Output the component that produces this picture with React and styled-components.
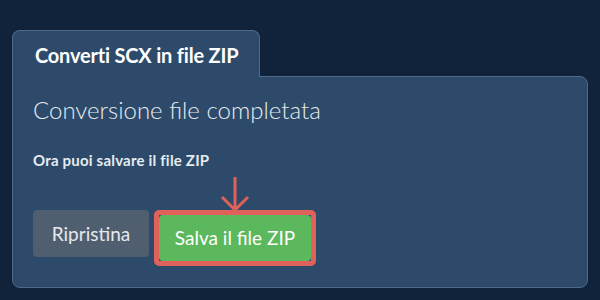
import React from "react";
import styled, { createGlobalStyle } from "styled-components";

const Global = createGlobalStyle`
  html, body { margin: 0; padding: 0; background: #11233a; }
  body { font-family: Lato, "Open Sans", sans-serif; width: 600px; height: 300px; overflow: hidden; }
`;

const Page = styled.div`
  padding: 30px 12px 0 12px;
  display: flex;
  flex-direction: column;
  align-items: flex-start;
`;

const Tab = styled.div`
  box-sizing: border-box;
  width: 248px;
  height: 47px;
  background: #2d4a6a;
  border: 1px solid #4d6888;
  border-bottom: none;
  border-radius: 8px 8px 0 0;
  margin-bottom: -1px;
  position: relative;
  z-index: 1;
  padding: 12px 0 0 22px;
  color: #ffffff;
  font-weight: 700;
  font-size: 20px;
  line-height: 1.2;
  letter-spacing: -0.2px;
`;

const Panel = styled.div`
  box-sizing: border-box;
  width: 576px;
  height: 212px;
  background: #2d4a6a;
  border: 1px solid #4d6888;
  border-radius: 0 8px 8px 8px;
  padding: 19px 20px 0 20px;
  display: flex;
  flex-direction: column;
  align-items: flex-start;
`;

const Heading = styled.div`
  color: #e6ebf0;
  font-weight: 300;
  font-size: 24px;
  line-height: 1.2;
`;

const Note = styled.div`
  margin-top: 26px;
  color: #e6ebf0;
  font-weight: 700;
  font-size: 15px;
  letter-spacing: 0.2px;
  line-height: 1.2;
`;

const Actions = styled.div`
  margin-top: 41px;
  display: flex;
  align-items: flex-start;
  gap: 5px;
`;

const Button = styled.button`
  box-sizing: border-box;
  border: none;
  border-radius: 4px;
  font-family: Lato, sans-serif;
  font-size: 19px;
  font-weight: 400;
  line-height: 1;
  cursor: pointer;
  display: flex;
  align-items: center;
  justify-content: center;
  background: ${(p) => (p.$variant === "success" ? "#5cb85c" : "#4f5f70")};
  color: ${(p) => (p.$variant === "success" ? "#ffffff" : "#e6e9ec")};
  width: ${(p) => p.$w}px;
  height: ${(p) => p.$h}px;
  padding: 0;
`;

const Highlight = styled.div`
  position: relative;
  box-sizing: border-box;
  border: 5px solid #e0605a;
  border-radius: 5px;
  padding: 0;
  display: flex;
`;

const Arrow = styled.svg`
  position: absolute;
  left: 50%;
  top: -38px;
  transform: translateX(-50%);
  overflow: visible;
`;

export default function App() {
  return (
    <>
      <Global />
      <Page>
        <Tab>Converti SCX in file ZIP</Tab>
        <Panel>
          <Heading>Conversione file completata</Heading>
          <Note>Ora puoi salvare il file ZIP</Note>
          <Actions>
            <Button $w={116} $h={47}>Ripristina</Button>
            <Highlight>
              <Arrow width="30" height="34" viewBox="0 0 30 34">
                <path
                  d="M15 0 L15 33 M2 20 L15 33 L28 20"
                  fill="none"
                  stroke="#e0605a"
                  strokeWidth="3"
                />
              </Arrow>
              <Button $variant="success" $w={152} $h={46}>Salva il file ZIP</Button>
            </Highlight>
          </Actions>
        </Panel>
      </Page>
    </>
  );
}
